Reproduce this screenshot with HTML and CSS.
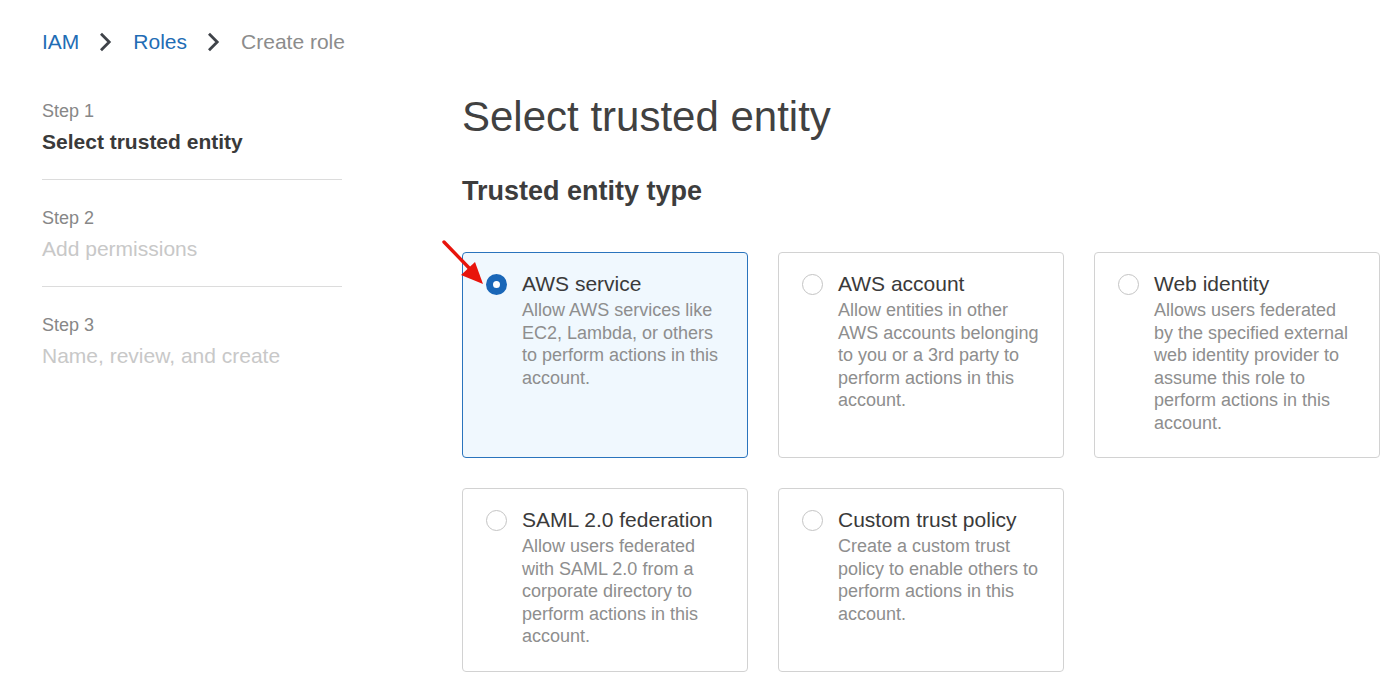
FILE: index.html
```html
<!DOCTYPE html>
<html lang="en">
<head>
<meta charset="utf-8">
<title>Create role</title>
<link rel="stylesheet" href="styles.css">
</head>
<body>
  <nav class="breadcrumb">
    <a class="crumb-link" href="#">IAM</a>
    <svg class="chev" width="13" height="20" viewBox="0 0 13 20"><path d="M2 1.8 L10.2 10 L2 18.2" fill="none" stroke="#3f4349" stroke-width="2.8"/></svg>
    <a class="crumb-link" href="#">Roles</a>
    <svg class="chev" width="13" height="20" viewBox="0 0 13 20"><path d="M2 1.8 L10.2 10 L2 18.2" fill="none" stroke="#3f4349" stroke-width="2.8"/></svg>
    <span class="crumb-current">Create role</span>
  </nav>

  <div class="layout">
    <aside class="steps">
      <div class="step">
        <div class="step-num">Step 1</div>
        <div class="step-title active">Select trusted entity</div>
      </div>
      <div class="step">
        <div class="step-num">Step 2</div>
        <div class="step-title">Add permissions</div>
      </div>
      <div class="step last">
        <div class="step-num">Step 3</div>
        <div class="step-title">Name, review, and create</div>
      </div>
    </aside>

    <main class="main">
      <h1 class="page-title">Select trusted entity</h1>
      <h2 class="section-title">Trusted entity type</h2>
      <div class="cards">
        <div class="card selected">
          <span class="radio checked"></span>
          <div class="card-body">
            <div class="card-title">AWS service</div>
            <div class="card-desc">Allow AWS services like EC2, Lambda, or others to perform actions in this account.</div>
          </div>
          <svg class="arrow" width="50" height="52" viewBox="0 0 50 52"><line x1="3" y1="3" x2="32" y2="33" stroke="#e8140c" stroke-width="3.4" stroke-linecap="round"/><polygon points="42,45 20,36 34,23" fill="#e8140c"/></svg>
        </div>
        <div class="card">
          <span class="radio"></span>
          <div class="card-body">
            <div class="card-title">AWS account</div>
            <div class="card-desc">Allow entities in other AWS accounts belonging to you or a 3rd party to perform actions in this account.</div>
          </div>
        </div>
        <div class="card">
          <span class="radio"></span>
          <div class="card-body">
            <div class="card-title">Web identity</div>
            <div class="card-desc">Allows users federated by the specified external web identity provider to assume this role to perform actions in this account.</div>
          </div>
        </div>
        <div class="card">
          <span class="radio"></span>
          <div class="card-body">
            <div class="card-title">SAML 2.0 federation</div>
            <div class="card-desc">Allow users federated with SAML 2.0 from a corporate directory to perform actions in this account.</div>
          </div>
        </div>
        <div class="card">
          <span class="radio"></span>
          <div class="card-body">
            <div class="card-title">Custom trust policy</div>
            <div class="card-desc">Create a custom trust policy to enable others to perform actions in this account.</div>
          </div>
        </div>
      </div>
    </main>
  </div>
</body>
</html>
```

FILE: styles.css
```css
html, body {
  margin: 0;
  background: #ffffff;
}

body {
  padding: 27px 20px 0 42px;
  font-family: "Liberation Sans", Arial, sans-serif;
  color: #3d3d3d;
}

.breadcrumb {
  display: flex;
  align-items: center;
  height: 30px;
  font-size: 21px;
  line-height: 30px;
}

.crumb-link {
  color: #1f6db5;
  text-decoration: none;
}

.chev {
  margin: 0 21px 0 20px;
}

.crumb-current {
  color: #8c8c8c;
}

.layout {
  display: flex;
  gap: 120px;
  margin-top: 35px;
}

.steps {
  width: 300px;
  flex: none;
  padding-top: 5px;
}

.step {
  padding: 24px 0 22px;
  border-bottom: 1px solid #dcdcdc;
}

.step:first-child {
  padding-top: 0;
}

.step.last {
  border-bottom: none;
}

.step-num {
  font-size: 18px;
  line-height: 28px;
  color: #878787;
}

.step-title {
  margin-top: 2px;
  font-size: 21px;
  line-height: 30px;
  color: #c8c8c8;
}

.step-title.active {
  font-weight: bold;
  color: #3a3a3a;
}

.main {
  flex: 1;
}

.page-title {
  margin: 0;
  font-size: 42px;
  line-height: 50px;
  font-weight: normal;
  color: #414141;
}

.section-title {
  margin: 31px 0 0;
  font-size: 27px;
  line-height: 36px;
  font-weight: bold;
  color: #3d3d3d;
}

.cards {
  display: grid;
  grid-template-columns: repeat(3, 286px);
  gap: 30px;
  margin-top: 43px;
}

.card {
  position: relative;
  display: flex;
  gap: 15px;
  align-items: flex-start;
  padding: 16px 20px 23px 23px;
  border: 1px solid #d2d2d2;
  border-radius: 4px;
  background: #ffffff;
}

.card.selected {
  border-color: #2a74bd;
  background: #f0f8fe;
}

.radio {
  flex: none;
  box-sizing: border-box;
  width: 21px;
  height: 21px;
  margin-top: 4.5px;
  border: 1.5px solid #c4c4c4;
  border-radius: 50%;
  background: #ffffff;
}

.radio.checked {
  border: 7px solid #1a67b8;
  background: #ffffff;
}

.card-body {
  flex: 1;
  min-width: 0;
}

.card-title {
  font-size: 21px;
  line-height: 30px;
  color: #3a3a3a;
}

.card-desc {
  font-size: 18px;
  line-height: 22.5px;
  color: #8e8e8e;
}

.arrow {
  position: absolute;
  left: -22px;
  top: -14px;
  pointer-events: none;
}
```
